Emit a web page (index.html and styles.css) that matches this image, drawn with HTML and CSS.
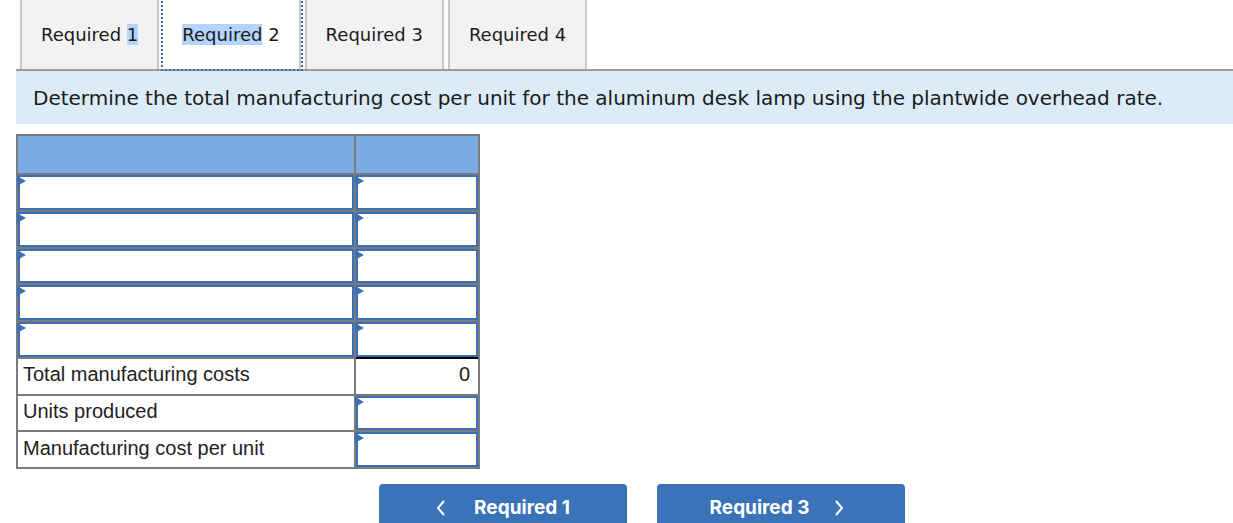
FILE: index.html
```html
<!DOCTYPE html>
<html lang="en">
<head>
<meta charset="utf-8">
<title>Required 2</title>
<link rel="stylesheet" href="styles.css">
</head>
<body>
<div class="page">
  <div class="tabs">
    <div class="tab"><span>Required <span class="sel">1</span></span></div>
    <div class="tab tab-active"><span><span class="sel">Required</span> 2</span></div>
    <div class="tab"><span>Required 3</span></div>
    <div class="tab"><span>Required 4</span></div>
  </div>
  <div class="instruction">Determine the total manufacturing cost per unit for the aluminum desk lamp using the plantwide overhead rate.</div>

  <div class="grid">
    <div class="cell head"></div>
    <div class="cell head"></div>

    <div class="cell input"><span class="flag"></span></div>
    <div class="cell input"><span class="flag"></span></div>
    <div class="cell input"><span class="flag"></span></div>
    <div class="cell input"><span class="flag"></span></div>
    <div class="cell input"><span class="flag"></span></div>
    <div class="cell input"><span class="flag"></span></div>
    <div class="cell input"><span class="flag"></span></div>
    <div class="cell input"><span class="flag"></span></div>
    <div class="cell input"><span class="flag"></span></div>
    <div class="cell input"><span class="flag"></span></div>

    <div class="cell label">Total manufacturing costs</div>
    <div class="cell value total">0</div>
    <div class="cell label">Units produced</div>
    <div class="cell input"><span class="flag"></span></div>
    <div class="cell label">Manufacturing cost per unit</div>
    <div class="cell input"><span class="flag"></span></div>
  </div>

  <div class="nav">
    <button class="btn">
      <svg class="chev" width="10" height="16" viewBox="0 0 10 16"><polyline points="8,1 2,8 8,15" fill="none" stroke="#fff" stroke-width="2"/></svg>
      <span class="btn-text btn-text-l">Required 1</span>
    </button>
    <button class="btn btn-next">
      <span class="btn-text btn-text-r">Required 3</span>
      <svg class="chev" width="10" height="16" viewBox="0 0 10 16"><polyline points="2,1 8,8 2,15" fill="none" stroke="#fff" stroke-width="2"/></svg>
    </button>
  </div>
</div>
</body>
</html>
```

FILE: styles.css
```css
html, body {
  margin: 0;
  padding: 0;
  background: #fff;
}

.page {
  padding-left: 16px;
  font-family: "DejaVu Sans", Verdana, sans-serif;
  color: #1a1a1a;
}

.tabs {
  display: flex;
  gap: 4px;
  padding-left: 4px;
  border-bottom: 2px solid #9a9a9a;
  height: 69px;
}

.tab {
  height: 69px;
  box-sizing: border-box;
  padding: 0 19px;
  display: flex;
  align-items: center;
  background: #f2f2f2;
  border-left: 2px solid #c8c8c8;
  border-right: 2px solid #c8c8c8;
  font-size: 18px;
  color: #1a1a1a;
  white-space: nowrap;
}

.tab-active {
  background: #fff;
  border-left: none;
  outline: 2px dotted #3a72b8;
}

.sel {
  background: #b3d4fc;
}

.instruction {
  background: #dcebf8;
  height: 53px;
  display: flex;
  align-items: center;
  padding-left: 17px;
  font-size: 20px;
  color: #1a1a1a;
  white-space: nowrap;
}

.grid {
  margin-top: 10px;
  display: grid;
  width: 464px;
  box-sizing: border-box;
  grid-template-columns: 336px 122px;
  grid-template-rows: 37px repeat(8, 34.75px);
  gap: 2px;
  padding: 2px;
  background: #7b7b7b;
  font-family: "Liberation Sans", Arial, sans-serif;
  font-size: 20px;
  color: #222;
}

.cell {
  background: #fff;
  position: relative;
  box-sizing: border-box;
}

.head {
  background: #7aace3;
}

.input {
  box-shadow: inset 0 0 0 2px #3b70b7;
}

.flag {
  position: absolute;
  left: -1px;
  top: 1px;
  width: 0;
  height: 0;
  border-left: 9px solid #3b70b7;
  border-top: 5px solid transparent;
  border-bottom: 5px solid transparent;
}

.label {
  display: flex;
  align-items: center;
  padding-left: 5px;
  padding-bottom: 3px;
  white-space: nowrap;
}

.value {
  display: flex;
  align-items: center;
  justify-content: flex-end;
  padding-right: 8px;
  padding-bottom: 3px;
}

.total {
  margin-top: -2px;
  border-top: 2px solid #000;
}

.nav {
  display: flex;
  gap: 30px;
  margin-top: 15px;
  margin-left: 363px;
}

.btn {
  width: 248px;
  height: 48px;
  border: none;
  border-radius: 4px;
  background: #3a73b8;
  color: #fff;
  display: flex;
  align-items: flex-start;
  justify-content: center;
  padding: 12px 0 0 0;
  font-family: "Inter", "Roboto", sans-serif;
  font-weight: 700;
  font-size: 19px;
}

.btn-next {
  padding-right: 8px;
}

.chev {
  margin-top: 4px;
}

.btn-text-l {
  margin-left: 28px;
}

.btn-text-r {
  margin-right: 25px;
}
```
